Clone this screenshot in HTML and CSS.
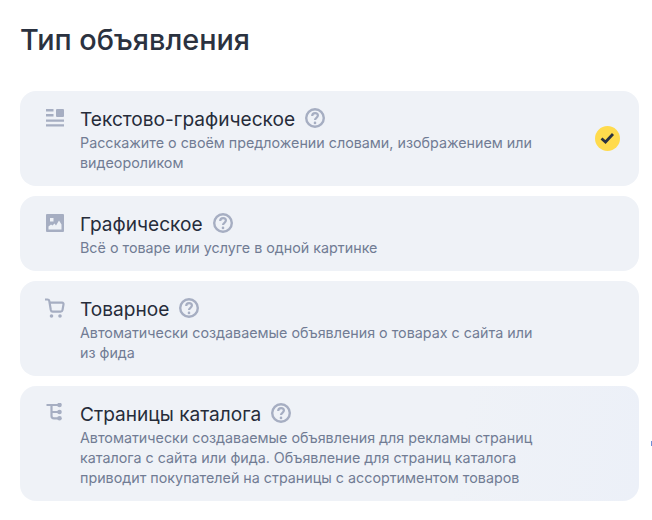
FILE: index.html
```html
<!DOCTYPE html>
<html lang="ru">
<head>
<meta charset="utf-8">
<title>Тип объявления</title>
<link rel="stylesheet" href="styles.css">
</head>
<body>
<main class="page">
  <h1 class="heading">Тип объявления</h1>
  <div class="list">
    <section class="card">
      <svg class="type-icon" viewBox="0 0 20 20"><path class="fill" d="M1 1h7.500v2.500H1zM1 6h7.500v2.500H1zM1 11.500h18v2.200H1zM1 16.300h18v2.200H1z"/><rect class="fill" x="11" y="1" width="8" height="8" rx="1"/></svg>
      <div class="body">
        <div class="title-row"><h2 class="title">Текстово-графическое</h2><svg class="help" viewBox="0 0 20 20"><circle class="ring" cx="10" cy="10" r="8.800"/><path class="mark" d="M7.200 7.900c0-1.600 1.200-2.700 2.900-2.700s2.800 1 2.800 2.400c0 2.200-2.900 2.200-2.900 4.300"/><circle class="dot" cx="10" cy="14.900" r="1.300"/></svg></div>
        <p class="desc">Расскажите о своём предложении словами, изображением или видеороликом</p>
      </div>
      <span class="check"><svg viewBox="0 0 25 25"><path d="M6.500 12.500l4 3.500 7.500-8"/></svg></span>
    </section>
    <section class="card">
      <svg class="type-icon" viewBox="0 0 20 20"><path class="fill" fill-rule="evenodd" d="M2 1h16a1 1 0 0 1 1 1v16a1 1 0 0 1-1 1H2a1 1 0 0 1-1-1V2a1 1 0 0 1 1-1zM5 5v3.500h3.500V5zM3.500 16.500h13v-5l-2.500-4-3 5-1.500-2-2 2-1.500-1-2.500 2z"/></svg>
      <div class="body">
        <div class="title-row"><h2 class="title">Графическое</h2><svg class="help" viewBox="0 0 20 20"><circle class="ring" cx="10" cy="10" r="8.800"/><path class="mark" d="M7.200 7.900c0-1.600 1.200-2.700 2.900-2.700s2.800 1 2.800 2.400c0 2.200-2.900 2.200-2.900 4.300"/><circle class="dot" cx="10" cy="14.900" r="1.300"/></svg></div>
        <p class="desc">Всё о товаре или услуге в одной картинке</p>
      </div>
    </section>
    <section class="card">
      <svg class="type-icon" viewBox="0 0 20 20"><path class="line" d="M0 1.500h2.500c1 0 1.600.5 1.800 1.500l1.500 9c.2 1 .8 1.700 1.800 1.700h8c1 0 1.700-.6 1.900-1.600l1-5.700c.2-1-.4-1.700-1.400-1.700H4.700"/><circle class="fill" cx="6.500" cy="18" r="1.800"/><circle class="fill" cx="15" cy="18" r="1.800"/></svg>
      <div class="body">
        <div class="title-row"><h2 class="title">Товарное</h2><svg class="help" viewBox="0 0 20 20"><circle class="ring" cx="10" cy="10" r="8.800"/><path class="mark" d="M7.200 7.900c0-1.600 1.200-2.700 2.900-2.700s2.800 1 2.800 2.400c0 2.200-2.900 2.200-2.900 4.300"/><circle class="dot" cx="10" cy="14.900" r="1.300"/></svg></div>
        <p class="desc">Автоматически создаваемые объявления о товарах с сайта или<br>из фида</p>
      </div>
    </section>
    <section class="card card-last">
      <svg class="type-icon" viewBox="0 0 20 20"><path class="line" d="M1.500 2h12M6.500 2v11c0 1.500.8 2.300 2.500 2.300h5M6.500 9h7"/><circle class="fill" cx="14.500" cy="2" r="2.300"/><circle class="fill" cx="14.500" cy="9" r="2.300"/><circle class="fill" cx="14.500" cy="15.300" r="2.300"/></svg>
      <div class="body">
        <div class="title-row"><h2 class="title">Страницы каталога</h2><svg class="help" viewBox="0 0 20 20"><circle class="ring" cx="10" cy="10" r="8.800"/><path class="mark" d="M7.200 7.900c0-1.600 1.200-2.700 2.900-2.700s2.800 1 2.800 2.400c0 2.200-2.900 2.200-2.900 4.300"/><circle class="dot" cx="10" cy="14.900" r="1.300"/></svg></div>
        <p class="desc">Автоматически создаваемые объявления для рекламы страниц<br>каталога с сайта или фида. Объявление для страниц каталога<br>приводит покупателей на страницы с ассортиментом товаров</p>
      </div>
    </section>
  </div>
</main>
<span class="edge-mark"></span>
</body>
</html>
```
FILE: styles.css
```css
* { box-sizing: border-box; }
html, body { margin: 0; height: 100%; background: #fff; overflow: hidden; }
body { font-family: Inter, "Noto Sans", sans-serif; color: #262c3a; }
.page { padding: 20px 13px 0 20px; }
.heading { margin: 0 0 31px; font-size: 28.8px; line-height: 40px; font-weight: 500; color: #2b3240; }
.list { display: flex; flex-direction: column; gap: 10px; }
.card { display: flex; align-items: flex-start; padding: 15px 20px 13px 25px; border-radius: 16px; background: #eff2f7; position: relative; }
.card-last { background: linear-gradient(100deg, #eff2f7 70%, #ecf0f8 100%); }
.type-icon { flex: none; width: 20px; height: 20px; margin: 2px 15px 0 0; }
.fill { fill: #a6aec2; }
.line { fill: none; stroke: #a6aec2; stroke-width: 2.200; }
.body { flex: 1; min-width: 0; max-width: 475px; }
.title-row { display: flex; align-items: center; gap: 10px; height: 24px; }
.title { margin: 0; padding-top: 1px; font-size: 19.100px; line-height: 24px; font-weight: 400; color: #262c3a; }
.help { flex: none; width: 20px; height: 20px; }
.ring { fill: none; stroke: #a6aec2; stroke-width: 2.400; }
.mark { fill: none; stroke: #a6aec2; stroke-width: 2.200; }
.dot { fill: #a6aec2; }
.desc { margin: 3px 0 0; font-size: 14.3px; line-height: 20px; color: #717c94; }
.check { position: absolute; right: 19px; top: 35px; width: 25px; height: 25px; border-radius: 50%; background: #ffdb4d; display: flex; }
.check svg { width: 25px; height: 25px; fill: none; stroke: #2b3240; stroke-width: 2.800; }
.edge-mark { position: absolute; left: 651px; top: 441px; width: 1px; height: 5px; background: #6f8fd8; }
```
